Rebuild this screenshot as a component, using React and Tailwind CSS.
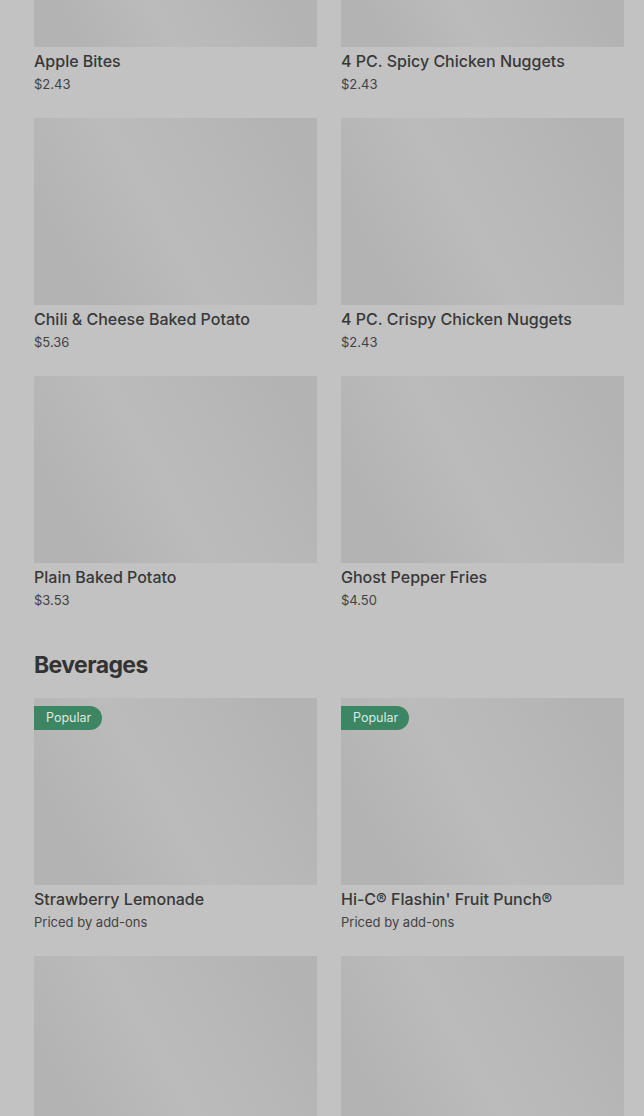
const sides = [
    { name: "Apple Bites", price: "$2.43" },
    { name: "4 PC. Spicy Chicken Nuggets", price: "$2.43" },
    { name: "Chili & Cheese Baked Potato", price: "$5.36" },
    { name: "4 PC. Crispy Chicken Nuggets", price: "$2.43" },
    { name: "Plain Baked Potato", price: "$3.53" },
    { name: "Ghost Pepper Fries", price: "$4.50" },
];

const beverages = [
    { name: "Strawberry Lemonade", price: "Priced by add-ons", popular: true },
    { name: "Hi-C® Flashin' Fruit Punch®", price: "Priced by add-ons", popular: true },
    { name: "", price: "" },
    { name: "", price: "" },
];

function ItemCard({ item, first }) {
    return (
        <div className="flex flex-col">
            <div
                className={
                    "relative w-full bg-[linear-gradient(60deg,#b3b3b3_15%,#bbbbbb_45%,#b8b8b8_65%,#b3b3b3_90%)] " +
                    (first ? "h-[47px]" : "h-[187px]")
                }
            >
                {item.popular && (
                    <span className="absolute left-0 top-[8px] h-[24px] w-[68px] rounded-r-full bg-[#3d8663] text-[#dfe9e3] text-[12.5px] leading-[24px] pl-[12px]">
                        Popular
                    </span>
                )}
            </div>
            {item.name && (
                <div className="mt-[2px]">
                    <div className="text-[16px] leading-[24px] font-medium text-[#383838]">
                        {item.name}
                    </div>
                    <div className="text-[13px] leading-[23px] text-[#424242]">
                        {item.price}
                    </div>
                </div>
            )}
        </div>
    );
}

export default function App() {
    return (
        <div className="h-[1116px] overflow-hidden bg-[#c2c2c2] pl-[34px] pr-[20px] font-['Inter',sans-serif]">
            <div className="grid grid-cols-2 gap-x-[24px] gap-y-[22px]">
                {sides.map((item, i) => (
                    <ItemCard key={item.name} item={item} first={i < 2} />
                ))}
            </div>

            <h2 className="mt-[38px] mb-[18px] text-[23px] leading-[30px] font-bold tracking-[-0.6px] text-[#333333]">
                Beverages
            </h2>

            <div className="grid grid-cols-2 gap-x-[24px] gap-y-[22px]">
                {beverages.map((item, i) => (
                    <ItemCard key={i} item={item} />
                ))}
            </div>
        </div>
    );
}
